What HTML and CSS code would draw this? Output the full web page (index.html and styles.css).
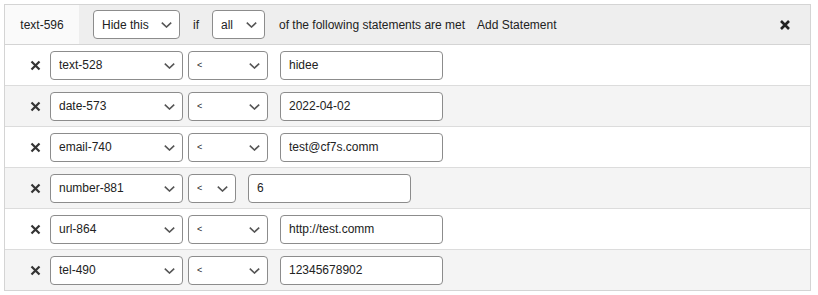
FILE: index.html
```html
<!DOCTYPE html>
<html lang="en">
<head>
    <meta charset="UTF-8">
    <meta name="viewport" content="width=device-width, initial-scale=1.0">
    <title>Conditional Fields</title>
    <link rel="stylesheet" href="styles.css">
</head>
<body>
    <div class="group">
        <div class="group-header">
            <div class="group-tab">text-596</div>
            <span class="select-wrap action-select">
                <select class="field">
                    <option>Hide this</option>
                    <option>Show this</option>
                </select>
                <svg class="chevron" width="11" height="6" viewBox="0 0 11 6"><path d="M0.8 0.6 L5.5 5 L10.2 0.6" fill="none" stroke="#555" stroke-width="1.6"/></svg>
            </span>
            <span class="label label-if">if</span>
            <span class="select-wrap all-select">
                <select class="field">
                    <option>all</option>
                    <option>any</option>
                </select>
                <svg class="chevron" width="11" height="6" viewBox="0 0 11 6"><path d="M0.8 0.6 L5.5 5 L10.2 0.6" fill="none" stroke="#555" stroke-width="1.6"/></svg>
            </span>
            <span class="label">of the following statements are met</span>
            <span class="label add-link">Add Statement</span>
            <button class="remove-group" title="Remove">
                <svg width="12" height="12" viewBox="0 0 12 12"><path d="M2 2 L10 10 M10 2 L2 10" stroke="#222" stroke-width="2.6"/></svg>
            </button>
        </div>

        <div class="statement">
            <button class="remove-statement"><svg width="11" height="11" viewBox="0 0 11 11"><path d="M1.5 1.5 L9.5 9.5 M9.5 1.5 L1.5 9.5" stroke="#333" stroke-width="2.2"/></svg></button>
            <span class="select-wrap if-field">
                <select class="field"><option>text-528</option></select>
                <svg class="chevron" width="11" height="6" viewBox="0 0 11 6"><path d="M0.8 0.6 L5.5 5 L10.2 0.6" fill="none" stroke="#555" stroke-width="1.6"/></svg>
            </span>
            <span class="select-wrap operator">
                <select class="field"><option>&lt;</option></select>
                <svg class="chevron" width="11" height="6" viewBox="0 0 11 6"><path d="M0.8 0.6 L5.5 5 L10.2 0.6" fill="none" stroke="#555" stroke-width="1.6"/></svg>
            </span>
            <input class="field value" type="text" value="hidee">
        </div>

        <div class="statement">
            <button class="remove-statement"><svg width="11" height="11" viewBox="0 0 11 11"><path d="M1.5 1.5 L9.5 9.5 M9.5 1.5 L1.5 9.5" stroke="#333" stroke-width="2.2"/></svg></button>
            <span class="select-wrap if-field">
                <select class="field"><option>date-573</option></select>
                <svg class="chevron" width="11" height="6" viewBox="0 0 11 6"><path d="M0.8 0.6 L5.5 5 L10.2 0.6" fill="none" stroke="#555" stroke-width="1.6"/></svg>
            </span>
            <span class="select-wrap operator">
                <select class="field"><option>&lt;</option></select>
                <svg class="chevron" width="11" height="6" viewBox="0 0 11 6"><path d="M0.8 0.6 L5.5 5 L10.2 0.6" fill="none" stroke="#555" stroke-width="1.6"/></svg>
            </span>
            <input class="field value" type="text" value="2022-04-02">
        </div>

        <div class="statement">
            <button class="remove-statement"><svg width="11" height="11" viewBox="0 0 11 11"><path d="M1.5 1.5 L9.5 9.5 M9.5 1.5 L1.5 9.5" stroke="#333" stroke-width="2.2"/></svg></button>
            <span class="select-wrap if-field">
                <select class="field"><option>email-740</option></select>
                <svg class="chevron" width="11" height="6" viewBox="0 0 11 6"><path d="M0.8 0.6 L5.5 5 L10.2 0.6" fill="none" stroke="#555" stroke-width="1.6"/></svg>
            </span>
            <span class="select-wrap operator">
                <select class="field"><option>&lt;</option></select>
                <svg class="chevron" width="11" height="6" viewBox="0 0 11 6"><path d="M0.8 0.6 L5.5 5 L10.2 0.6" fill="none" stroke="#555" stroke-width="1.6"/></svg>
            </span>
            <input class="field value" type="text" value="test@cf7s.comm">
        </div>

        <div class="statement">
            <button class="remove-statement"><svg width="11" height="11" viewBox="0 0 11 11"><path d="M1.5 1.5 L9.5 9.5 M9.5 1.5 L1.5 9.5" stroke="#333" stroke-width="2.2"/></svg></button>
            <span class="select-wrap if-field">
                <select class="field"><option>number-881</option></select>
                <svg class="chevron" width="11" height="6" viewBox="0 0 11 6"><path d="M0.8 0.6 L5.5 5 L10.2 0.6" fill="none" stroke="#555" stroke-width="1.6"/></svg>
            </span>
            <span class="select-wrap operator operator-small">
                <select class="field"><option>&lt;</option></select>
                <svg class="chevron" width="11" height="6" viewBox="0 0 11 6"><path d="M0.8 0.6 L5.5 5 L10.2 0.6" fill="none" stroke="#555" stroke-width="1.6"/></svg>
            </span>
            <input class="field value" type="text" value="6">
        </div>

        <div class="statement">
            <button class="remove-statement"><svg width="11" height="11" viewBox="0 0 11 11"><path d="M1.5 1.5 L9.5 9.5 M9.5 1.5 L1.5 9.5" stroke="#333" stroke-width="2.2"/></svg></button>
            <span class="select-wrap if-field">
                <select class="field"><option>url-864</option></select>
                <svg class="chevron" width="11" height="6" viewBox="0 0 11 6"><path d="M0.8 0.6 L5.5 5 L10.2 0.6" fill="none" stroke="#555" stroke-width="1.6"/></svg>
            </span>
            <span class="select-wrap operator">
                <select class="field"><option>&lt;</option></select>
                <svg class="chevron" width="11" height="6" viewBox="0 0 11 6"><path d="M0.8 0.6 L5.5 5 L10.2 0.6" fill="none" stroke="#555" stroke-width="1.6"/></svg>
            </span>
            <input class="field value" type="text" value="http://test.comm">
        </div>

        <div class="statement">
            <button class="remove-statement"><svg width="11" height="11" viewBox="0 0 11 11"><path d="M1.5 1.5 L9.5 9.5 M9.5 1.5 L1.5 9.5" stroke="#333" stroke-width="2.2"/></svg></button>
            <span class="select-wrap if-field">
                <select class="field"><option>tel-490</option></select>
                <svg class="chevron" width="11" height="6" viewBox="0 0 11 6"><path d="M0.8 0.6 L5.5 5 L10.2 0.6" fill="none" stroke="#555" stroke-width="1.6"/></svg>
            </span>
            <span class="select-wrap operator">
                <select class="field"><option>&lt;</option></select>
                <svg class="chevron" width="11" height="6" viewBox="0 0 11 6"><path d="M0.8 0.6 L5.5 5 L10.2 0.6" fill="none" stroke="#555" stroke-width="1.6"/></svg>
            </span>
            <input class="field value" type="text" value="12345678902">
        </div>
    </div>
</body>
</html>
```

FILE: styles.css
```css
body {
    font-family: "Liberation Sans", Arial, sans-serif;
    font-size: 12px;
    color: #222;
    margin: 4px;
    background: #fff;
}
.group {
    width: 805px;
    border: 1px solid #d4d4d4;
    background: #fff;
}
.group-header {
    display: flex;
    align-items: center;
    height: 39px;
    background: #eeeeee;
    border-bottom: 1px solid #d4d4d4;
}
.group-tab {
    width: 74px;
    height: 100%;
    display: flex;
    align-items: center;
    justify-content: center;
    background: #fafafa;
    margin-right: 14px;
}
.label {
    margin-right: 12px;
}
.label-if {
    margin-left: 13px;
    margin-right: 13px;
}
.add-link {
    cursor: pointer;
}
.remove-group {
    margin-left: auto;
    margin-right: 19px;
    border: none;
    background: none;
    padding: 0;
    display: flex;
    cursor: pointer;
}
.field {
    font-family: "Liberation Sans", Arial, sans-serif;
    font-size: 12px;
    color: #222;
    height: 29px;
    box-sizing: border-box;
    border: 1px solid #8c8c8c;
    border-radius: 4px;
    background-color: #fff;
}
.select-wrap {
    position: relative;
    display: inline-flex;
}
.select-wrap select {
    width: 100%;
    appearance: none;
    -webkit-appearance: none;
    padding: 0 24px 0 8px;
}
.chevron {
    position: absolute;
    right: 8px;
    top: 12px;
    pointer-events: none;
}
.action-select {
    width: 87px;
}
.all-select {
    width: 53px;
    margin-right: 14px;
}
.statement {
    display: flex;
    align-items: center;
    height: 40px;
    padding-left: 25px;
    border-bottom: 1px solid #dcdcdc;
}
.statement:nth-child(odd) {
    background: #f4f4f4;
}
.statement:last-child {
    border-bottom: none;
}
.remove-statement {
    border: none;
    background: none;
    padding: 0;
    width: 11px;
    margin-right: 9px;
    display: flex;
    cursor: pointer;
}
.if-field {
    width: 133px;
}
.operator {
    width: 80px;
    margin-left: 5px;
}
.operator select {
    font-size: 9px;
}
.operator-small {
    width: 48px;
}
.value {
    width: 163px;
    margin-left: 12px;
    padding: 0 8px;
    font-size: 12px;
}
```
